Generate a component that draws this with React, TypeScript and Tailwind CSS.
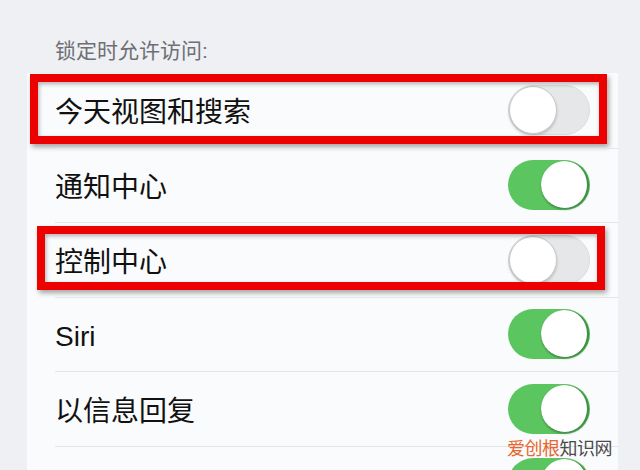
import React from "react";

type Row = { label: string; on: boolean; frame?: "a" | "b" };

const rows: Row[] = [
  { label: "今天视图和搜索", on: false, frame: "a" },
  { label: "通知中心", on: true },
  { label: "控制中心", on: false, frame: "b" },
  { label: "Siri", on: true },
  { label: "以信息回复", on: true },
  { label: "家居控制", on: true },
];

const frameCls = {
  a: "absolute left-[3px] right-[11px] top-[1px] bottom-[4px]",
  b: "absolute left-[10px] right-[13px] top-[4px] bottom-[7px]",
};

function Toggle({ on }: { on: boolean }) {
  if (on) {
    return (
      <div className="flex justify-end items-center w-[82px] h-[50px] p-px rounded-full bg-[#5bc65f] shrink-0">
        <div className="w-[48px] h-[48px] rounded-full bg-white border-r-[2px] border-b-[1px] border-[#3f8f45] shadow-[0_1px_2px_rgba(0,0,0,0.25)]" />
      </div>
    );
  }
  return (
    <div className="flex justify-start items-center w-[82px] h-[50px] rounded-full bg-[#e6e7e9] border border-[#dcdde0] shrink-0">
      <div className="w-[48px] h-[48px] rounded-full bg-white border border-[#c9cacd] shadow-[0_2px_3px_rgba(0,0,0,0.18)]" />
    </div>
  );
}

export default function App() {
  return (
    <div
      className="relative w-[640px] h-[470px] overflow-hidden bg-[#eef0f3]"
      style={{ fontFamily: '"Liberation Sans", "Noto Sans CJK SC", sans-serif' }}
    >
      <div className="pl-[55px] pt-[37px] h-[73px] text-[21px] leading-[28px] text-[#6e6f74]">
        锁定时允许访问:
      </div>

      <div className="ml-[27px] w-[591px] bg-[#fafbfc] flex flex-col">
        {rows.map((r, i) => (
          <div key={i} className="relative h-[74.5px] pl-[28px] flex flex-col">
            <div
              className={
                "flex flex-1 items-center justify-between pr-[28px] " +
                (i > 0 ? "border-t border-[#e3e5e8]" : "")
              }
            >
              <span className="pt-[6px] text-[28px] leading-none text-[#111]">{r.label}</span>
              <Toggle on={r.on} />
            </div>
            {r.frame && (
              <div
                className={
                  frameCls[r.frame] +
                  " border-[8px] border-[#ec0000] shadow-[2px_3px_5px_rgba(0,0,0,0.35),inset_1px_2px_4px_rgba(0,0,0,0.3)]"
                }
              />
            )}
          </div>
        ))}
      </div>

      <div className="absolute left-[507px] top-[437px] text-[18px] leading-[24px] tracking-[-0.5px]">
        <span className="text-[#e8652c]">爱创根</span>
        <span className="text-[#4a4a4a]">知识网</span>
      </div>
    </div>
  );
}
